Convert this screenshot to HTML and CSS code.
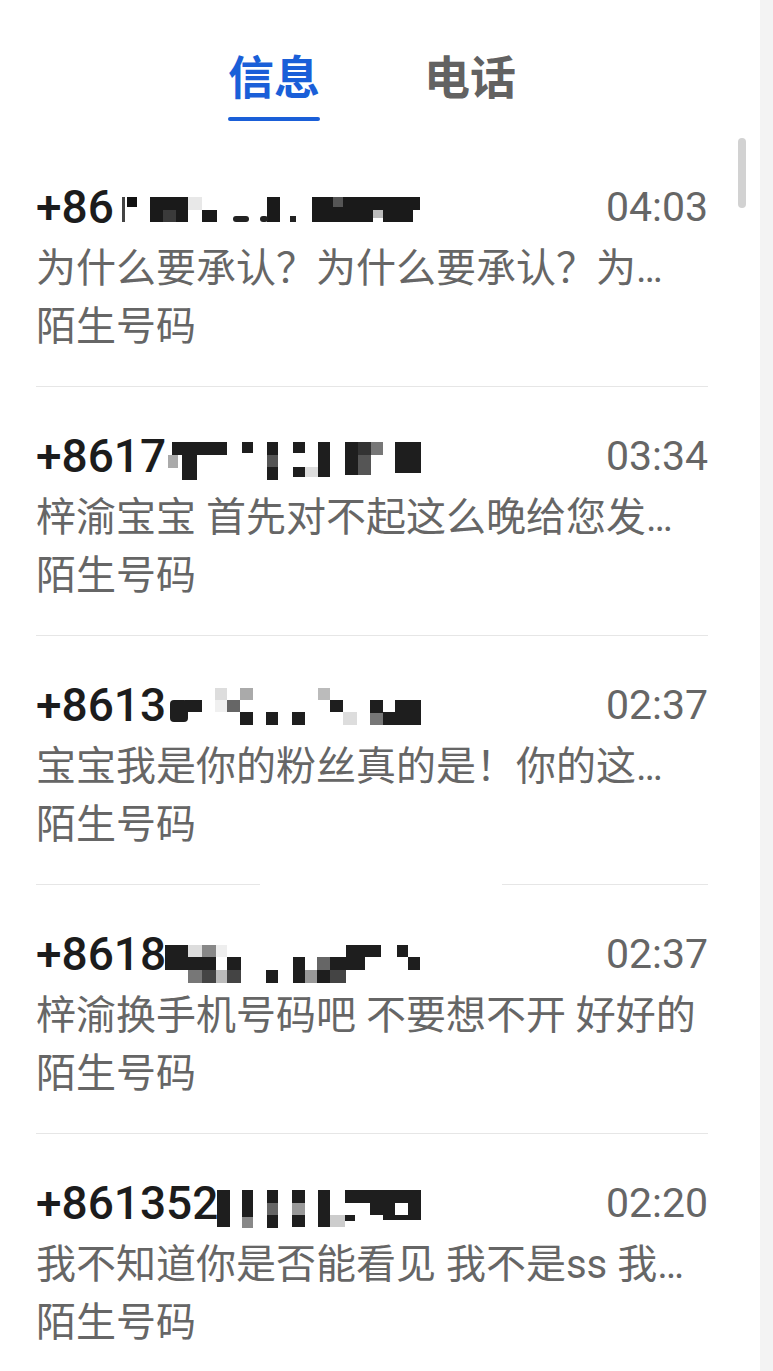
FILE: index.html
```html
<!DOCTYPE html>
<html>
  <head>
    <meta charset="utf-8">
    <title>信息</title>
    <link rel="stylesheet" href="styles.css">
  </head>
  <body>
    <div class="screen">
      <div class="tabs">
        <div class="tab active">信息</div>
        <div class="tab">电话</div>
      </div>
      <div class="scrollbar"></div>

      <div class="threads">
        <div class="thread">
          <div class="head">
            <span class="number">+86</span>
            <svg class="redact" viewBox="36 175 385 64">
              <rect x="122" y="197" width="3" height="25" fill="#444"/>
              <rect x="127" y="197" width="10" height="10" fill="#111"/>
              <rect x="150" y="197" width="38" height="25" fill="#1a1a1a"/>
              <rect x="163" y="210" width="13" height="12" fill="#3a3a3a"/>
              <rect x="188" y="197" width="14" height="13" fill="#e8e8e8"/>
              <rect x="202" y="210" width="15" height="12" fill="#1a1a1a"/>
              <rect x="233" y="216" width="16" height="6" rx="3" fill="#222"/>
              <rect x="267" y="197" width="13" height="25" fill="#1a1a1a"/>
              <rect x="260" y="216" width="8" height="6" rx="3" fill="#222"/>
              <rect x="290" y="216" width="6" height="6" fill="#222"/>
              <rect x="312" y="197" width="108" height="13" fill="#1a1a1a"/>
              <rect x="333" y="197" width="10" height="10" fill="#555"/>
              <rect x="312" y="210" width="61" height="12" fill="#1a1a1a"/>
              <rect x="373" y="210" width="10" height="8" fill="#bbb"/>
              <rect x="383" y="210" width="30" height="12" fill="#1a1a1a"/>
            </svg>
            <span class="time">04:03</span>
          </div>
          <div class="preview">为什么要承认？为什么要承认？为…</div>
          <div class="tag">陌生号码</div>
        </div>

        <div class="thread">
          <div class="head">
            <span class="number">+8617</span>
            <svg class="redact" viewBox="36 424 385 64">
              <rect x="172" y="442" width="55" height="13" fill="#1e1e1e"/>
              <rect x="168" y="455" width="10" height="13" fill="#aaa"/>
              <rect x="182" y="455" width="15" height="25" fill="#1e1e1e"/>
              <rect x="242" y="442" width="11" height="11" fill="#1e1e1e"/>
              <rect x="267" y="442" width="11" height="38" fill="#1e1e1e"/>
              <rect x="267" y="455" width="11" height="12" fill="#555"/>
              <rect x="293" y="442" width="12" height="11" fill="#1e1e1e"/>
              <rect x="293" y="467" width="12" height="10" fill="#1e1e1e"/>
              <rect x="305" y="467" width="13" height="10" fill="#ddd"/>
              <rect x="318" y="442" width="12" height="35" fill="#1e1e1e"/>
              <rect x="345" y="442" width="13" height="33" fill="#1e1e1e"/>
              <rect x="358" y="442" width="13" height="13" fill="#333"/>
              <rect x="371" y="442" width="12" height="13" fill="#777"/>
              <rect x="358" y="455" width="13" height="20" fill="#555"/>
              <rect x="395" y="442" width="27" height="31" fill="#1e1e1e"/>
            </svg>
            <span class="time">03:34</span>
          </div>
          <div class="preview">梓渝宝宝 首先对不起这么晚给您发…</div>
          <div class="tag">陌生号码</div>
        </div>

        <div class="thread erased">
          <div class="head">
            <span class="number">+8613</span>
            <svg class="redact" viewBox="36 673 385 64">
              <rect x="170" y="700" width="18" height="22" rx="4" fill="#1e1e1e"/>
              <rect x="185" y="700" width="17" height="12" fill="#1e1e1e"/>
              <rect x="215" y="688" width="12" height="12" fill="#ddd"/>
              <rect x="240" y="688" width="13" height="12" fill="#aaa"/>
              <rect x="227" y="700" width="13" height="12" fill="#666"/>
              <rect x="215" y="700" width="12" height="12" fill="#f0f0f0"/>
              <rect x="240" y="712" width="13" height="13" fill="#1e1e1e"/>
              <rect x="266" y="712" width="12" height="13" fill="#1e1e1e"/>
              <rect x="292" y="712" width="13" height="13" fill="#1e1e1e"/>
              <rect x="318" y="688" width="12" height="12" fill="#bbb"/>
              <rect x="330" y="700" width="13" height="12" fill="#1e1e1e"/>
              <rect x="343" y="712" width="14" height="13" fill="#ddd"/>
              <rect x="370" y="700" width="13" height="13" fill="#1e1e1e"/>
              <rect x="370" y="713" width="13" height="12" fill="#777"/>
              <rect x="383" y="712" width="12" height="13" fill="#1e1e1e"/>
              <rect x="395" y="700" width="27" height="25" fill="#1e1e1e"/>
            </svg>
            <span class="time">02:37</span>
          </div>
          <div class="preview">宝宝我是你的粉丝真的是！你的这…</div>
          <div class="tag">陌生号码</div>
        </div>

        <div class="thread">
          <div class="head">
            <span class="number">+8618</span>
            <svg class="redact" viewBox="36 922 385 64">
              <rect x="165" y="945" width="23" height="25" fill="#1e1e1e"/>
              <rect x="188" y="945" width="14" height="12" fill="#ddd"/>
              <rect x="188" y="957" width="14" height="13" fill="#1e1e1e"/>
              <rect x="188" y="970" width="14" height="13" fill="#777"/>
              <rect x="202" y="945" width="14" height="12" fill="#888"/>
              <rect x="202" y="957" width="14" height="13" fill="#1e1e1e"/>
              <rect x="202" y="970" width="14" height="13" fill="#444"/>
              <rect x="216" y="945" width="11" height="12" fill="#eee"/>
              <rect x="216" y="970" width="11" height="13" fill="#bbb"/>
              <rect x="227" y="957" width="14" height="13" fill="#1e1e1e"/>
              <rect x="227" y="970" width="14" height="13" fill="#444"/>
              <rect x="266" y="970" width="12" height="13" fill="#1e1e1e"/>
              <rect x="293" y="957" width="12" height="26" fill="#1e1e1e"/>
              <rect x="305" y="970" width="12" height="13" fill="#999"/>
              <rect x="317" y="957" width="13" height="13" fill="#666"/>
              <rect x="317" y="970" width="13" height="13" fill="#1e1e1e"/>
              <rect x="330" y="957" width="16" height="13" fill="#1e1e1e"/>
              <rect x="330" y="970" width="16" height="13" fill="#444"/>
              <rect x="346" y="945" width="19" height="25" fill="#1e1e1e"/>
              <rect x="365" y="945" width="16" height="12" fill="#1e1e1e"/>
              <rect x="397" y="945" width="11" height="12" fill="#1e1e1e"/>
              <rect x="408" y="957" width="12" height="13" fill="#1e1e1e"/>
            </svg>
            <span class="time">02:37</span>
          </div>
          <div class="preview">梓渝换手机号码吧 不要想不开 好好的</div>
          <div class="tag">陌生号码</div>
        </div>

        <div class="thread">
          <div class="head">
            <span class="number">+861352</span>
            <svg class="redact" viewBox="36 1171 385 64">
              <rect x="217" y="1190" width="13" height="37" fill="#1e1e1e"/>
              <rect x="242" y="1190" width="11" height="27" fill="#1e1e1e"/>
              <rect x="242" y="1217" width="11" height="11" fill="#888"/>
              <rect x="267" y="1190" width="11" height="38" fill="#1e1e1e"/>
              <rect x="267" y="1203" width="11" height="12" fill="#666"/>
              <rect x="292" y="1190" width="13" height="37" fill="#1e1e1e"/>
              <rect x="292" y="1203" width="13" height="12" fill="#999"/>
              <rect x="318" y="1190" width="12" height="37" fill="#1e1e1e"/>
              <rect x="330" y="1215" width="15" height="12" fill="#ccc"/>
              <rect x="345" y="1190" width="25" height="13" fill="#1e1e1e"/>
              <rect x="345" y="1215" width="10" height="6" fill="#1e1e1e"/>
              <rect x="370" y="1190" width="52" height="25" fill="#1e1e1e"/>
              <rect x="395" y="1203" width="13" height="12" fill="#fff"/>
              <rect x="383" y="1215" width="39" height="5" fill="#1e1e1e"/>
            </svg>
            <span class="time">02:20</span>
          </div>
          <div class="preview">我不知道你是否能看见 我不是ss 我…</div>
          <div class="tag">陌生号码</div>
        </div>
      </div>
    </div>
  </body>
</html>
```

FILE: styles.css
```css
body {
  margin: 0;
  background-color: #f3f3f3;
  font-family: Roboto, "Noto Sans CJK SC", sans-serif;
  overflow: hidden;
}
.screen {
  position: relative;
  width: 760px;
  height: 1371px;
  background: white;
  overflow: hidden;
}
.tabs {
  display: flex;
  justify-content: center;
  align-items: flex-start;
  gap: 104px;
  width: 740px;
  padding: 50px 0 17px 2px;
}
.tab {
  display: flex;
  flex-direction: column;
  align-items: center;
  font-size: 46px;
  line-height: 56px;
  font-weight: 700;
  color: #626262;
}
.tab.active {
  color: #1a5fd8;
}
.tab.active::after {
  content: "";
  width: 92px;
  height: 4px;
  margin-top: 11px;
  border-radius: 2px;
  background-color: #1a5fd8;
}
.scrollbar {
  position: absolute;
  left: 738px;
  top: 138px;
  width: 8px;
  height: 70px;
  border-radius: 4px;
  background-color: #d2d2d2;
}
.threads {
  margin-left: 36px;
  width: 672px;
}
.thread {
  padding: 37px 0 31px;
  border-bottom: 1px solid #e6e6e6;
}
.thread.erased {
  border-bottom-color: transparent;
  background: linear-gradient(
      to right,
      #e6e6e6 224px,
      transparent 224px 466px,
      #e6e6e6 466px
    )
    bottom / 100% 1px no-repeat;
  background-origin: border-box;
}
.head {
  position: relative;
  display: flex;
  justify-content: space-between;
  height: 64px;
  line-height: 64px;
}
.number {
  font-size: 46px;
  font-weight: 500;
  color: #1c1c1c;
}
.time {
  font-size: 41px;
  color: #666;
}
.redact {
  position: absolute;
  left: 0;
  top: 0;
  width: 385px;
  height: 64px;
}
.preview {
  font-size: 40px;
  line-height: 60px;
  color: #666;
  white-space: nowrap;
}
.tag {
  font-size: 40px;
  line-height: 56px;
  color: #666;
}
```
